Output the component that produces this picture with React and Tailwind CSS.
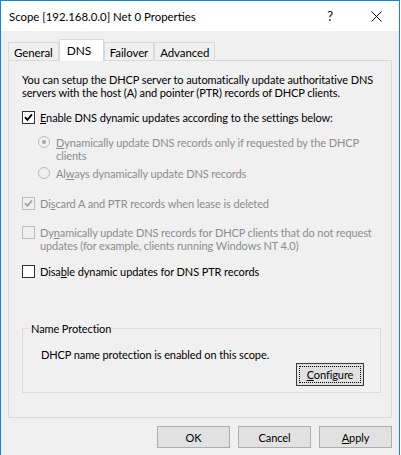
import React from 'react'

// Win10 "Scope Properties" dialog, DNS tab.

function Check({ checked, disabled }) {
  return (
    <span
      className={
        'flex h-[13px] w-[13px] shrink-0 items-center justify-center border ' +
        (disabled ? 'border-[#bcbcbc] bg-[#f0f0f0]' : 'border-[#333333] bg-white')
      }
    >
      {checked && (
        <svg width="9" height="9" viewBox="0 0 9 9">
          <path d="M1 4.2 L3.4 6.8 L8 1.4" fill="none" strokeWidth="1.8"
            stroke={disabled ? '#a3a3a3' : '#000000'} />
        </svg>
      )}
    </span>
  )
}

function Radio({ checked }) {
  return (
    <span className="flex h-[12px] w-[12px] shrink-0 items-center justify-center rounded-full border border-[#bcbcbc] bg-[#f0f0f0]">
      {checked && <span className="h-[4px] w-[4px] rounded-full bg-[#a3a3a3]" />}
    </span>
  )
}

function Tab({ label, active }) {
  if (active) {
    return (
      <div className="relative z-10 -mb-px flex h-[22px] w-[45px] items-start border border-b-0 border-[#d9d9d9] bg-white pl-[7px] pt-[4px] text-[12px]">
        {label}
      </div>
    )
  }
  return <div className="flex h-[18px] items-center border border-b-0 border-[#d9d9d9] bg-[#f0f0f0] px-[5px] pt-[1px] text-[11.5px]">{label}</div>
}

export default function App() {
  return (
    <div className='h-[455px] w-[401px] overflow-hidden bg-white font-["Lato",sans-serif] text-[11px] leading-[13px] tracking-[-0.1px] text-black'>
      <div className="flex h-[455px] w-[400px] flex-col border-l border-r border-t border-[#1883d7] bg-[#f0f0f0]">
        {/* title bar */}
        <div className="flex h-[30px] items-center bg-white">
          <span className="flex-1 pl-[8px] text-[11.4px] tracking-normal">Scope [192.168.0.0] Net 0 Properties</span>
          <span className="flex h-full w-[46px] items-center justify-center text-[13px]">?</span>
          <span className="flex h-full w-[46px] items-center justify-center">
            <svg width="11" height="11" viewBox="0 0 11 11">
              <path d="M0.5 0.5 L10.5 10.5 M10.5 0.5 L0.5 10.5" stroke="#000" strokeWidth="1" />
            </svg>
          </span>
        </div>

        <div className="flex flex-1 flex-col px-[7px] pt-[8px]">
          {/* tabs */}
          <div className="flex h-[21px] items-end">
            <Tab label="General" />
            <Tab label="DNS" active />
            <Tab label="Failover" />
            <Tab label="Advanced" />
          </div>

          {/* tab page */}
          <div className="flex h-[358px] flex-col border border-[#d9d9d9] bg-[#f0f0f0] pl-[13px] pt-[12px]">
            <p className="whitespace-nowrap">
              You can setup the DHCP server to automatically update authoritative DNS
              <br />
              servers with the host (A) and pointer (PTR) records of DHCP clients.
            </p>

            <div className="mt-[12px] flex items-start gap-[5px]">
              <Check checked />
              <span><u>E</u>nable DNS dynamic updates according to the settings below:</span>
            </div>

            <div className="mt-[12px] flex items-start gap-[6px] pl-[16px] text-[#8d8d8d]">
              <Radio checked />
              <span className="whitespace-nowrap">
                <u>D</u>ynamically update DNS records only if requested by the DHCP
                <br />
                clients
              </span>
            </div>

            <div className="mt-[5px] flex items-start gap-[6px] pl-[16px] text-[#8d8d8d]">
              <Radio />
              <span>Al<u>w</u>ays dynamically update DNS records</span>
            </div>

            <div className="mt-[17px] flex items-start gap-[5px] text-[#8d8d8d]">
              <Check checked disabled />
              <span>Di<u>s</u>card A and PTR records when lease is deleted</span>
            </div>

            <div className="mt-[16px] flex items-start gap-[5px] text-[#8d8d8d]">
              <Check disabled />
              <span className="whitespace-nowrap">
                Dy<u>n</u>amically update DNS records for DHCP clients that do not request
                <br />
                updates (for example, clients running Windows NT 4.0)
              </span>
            </div>

            <div className="mt-[13px] flex items-start gap-[5px]">
              <Check />
              <span>Disa<u>b</u>le dynamic updates for DNS PTR records</span>
            </div>

            <fieldset className="mt-[44px] flex w-[359px] flex-col border border-[#dcdcdc] pb-[6px] pl-[7px] pr-[16px]">
              <legend className="px-[1px] leading-[13px]">Name Protection</legend>
              <div className="ml-[11px] mt-[13px]">DHCP name protection is enabled on this scope.</div>
              <button className="mt-[2px] h-[23px] w-[68px] self-end border border-[#3a3a3a] bg-[#e1e1e1] outline outline-1 outline-dotted outline-black outline-offset-[-4px]">
                <u>C</u>onfigure
              </button>
            </fieldset>
          </div>

          {/* dialog buttons */}
          <div className="mt-[8px] flex justify-end gap-[8px]">
            <button className="h-[22px] w-[73px] border border-[#adadad] bg-[#e1e1e1]">OK</button>
            <button className="h-[22px] w-[73px] border border-[#adadad] bg-[#e1e1e1]">Cancel</button>
            <button className="h-[22px] w-[73px] border border-[#adadad] bg-[#e1e1e1]"><u>A</u>pply</button>
          </div>
        </div>
      </div>
    </div>
  )
}
